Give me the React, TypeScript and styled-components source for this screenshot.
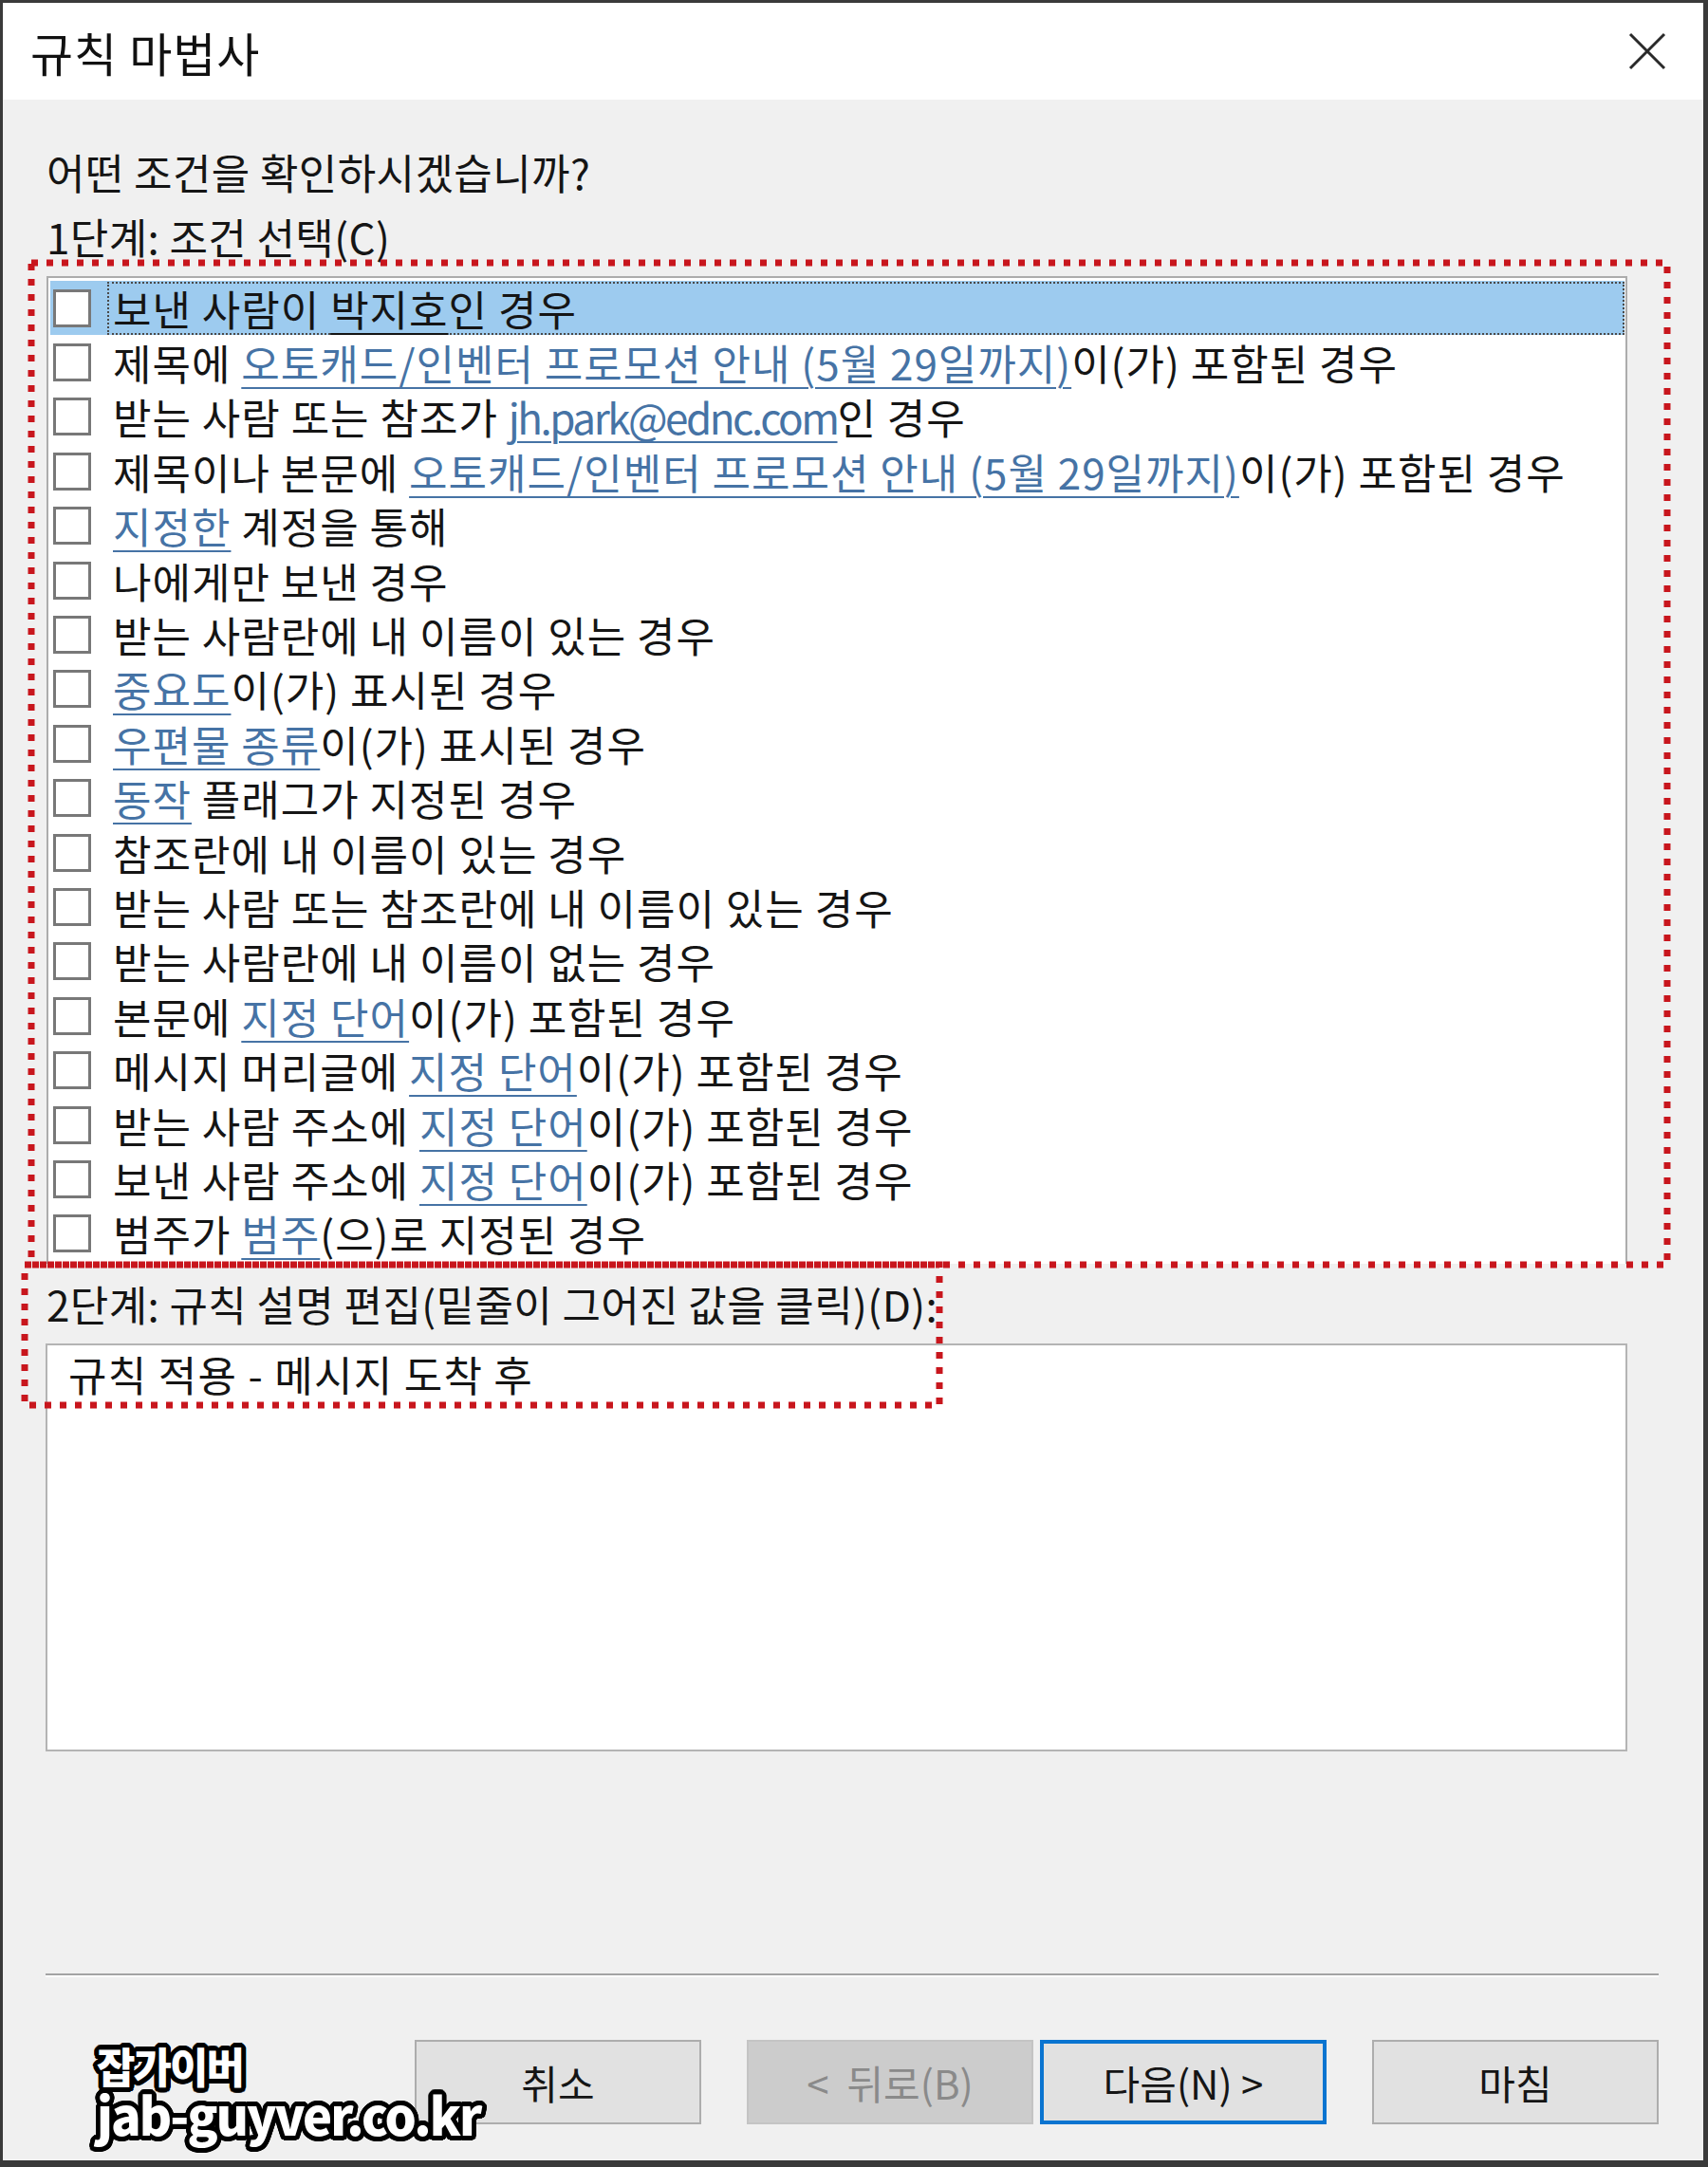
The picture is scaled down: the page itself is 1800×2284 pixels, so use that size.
import React from 'react';
import styled, { createGlobalStyle } from 'styled-components';

type Segment = { t: string; link?: boolean; latin?: boolean };

const GlobalStyle = createGlobalStyle`
  body {
    margin: 0;
    background: #3a3a3a;
  }
`;

const Screen = styled.div`
  position: relative;
  width: 1800px;
  height: 2284px;
  box-sizing: border-box;
  padding: 3px 5px 7px 3px;
  background: #3a3a3a;
  overflow: hidden;
  font-family: 'Noto Sans CJK KR', 'Noto Sans', sans-serif;
`;

const Window = styled.div`
  width: 1792px;
  height: 2274px;
  display: flex;
  flex-direction: column;
  background: #f0f0f0;
`;

const TitleBar = styled.div`
  height: 102px;
  flex-shrink: 0;
  background: #ffffff;
  display: flex;
  align-items: center;
  justify-content: space-between;
  padding: 0 38px 0 29px;
`;

const Title = styled.div`
  font-size: 49px;
  line-height: 60px;
  letter-spacing: 1px;
  color: #111;
  margin-top: 2px;
`;

const CloseButton = styled.div`
  width: 42px;
  height: 42px;
  display: flex;
  align-items: center;
  justify-content: center;
`;

const Body = styled.div`
  flex: 1;
  display: flex;
  flex-direction: column;
  padding: 0 47px 0 45px;
`;

const Label = styled.div<{ $top: number }>`
  margin-top: ${(p) => p.$top}px;
  padding-left: 1px;
  font-size: 44px;
  letter-spacing: 0.4px;
  line-height: 57px;
  height: 57px;
  color: #151515;
  white-space: nowrap;
`;

const ListBox = styled.div`
  margin: 13px 33px 0 1px;
  height: 1041px;
  box-sizing: border-box;
  border: 2px solid #acacac;
  border-bottom: none;
  background: #ffffff;
  padding: 3px 1px 0 2px;
  overflow: hidden;
`;

const Row = styled.div<{ $selected?: boolean }>`
  height: 57.4px;
  display: flex;
  align-items: center;
  background: ${(p) => (p.$selected ? '#9dcbef' : 'transparent')};
`;

const Check = styled.span`
  width: 40px;
  height: 40px;
  box-sizing: border-box;
  margin-left: 3px;
  flex-shrink: 0;
  border: 3px solid #787878;
  background: #ffffff;
`;

const ItemText = styled.span<{ $focused?: boolean }>`
  flex: 1;
  height: 56px;
  box-sizing: border-box;
  margin-left: 17px;
  padding-left: 4px;
  display: flex;
  align-items: center;
  border: 2px dotted ${(p) => (p.$focused ? '#4a4a4a' : 'transparent')};
  font-size: 44px;
  line-height: 52px;
  letter-spacing: 1px;
  color: #151515;
  white-space: pre;
`;

const LinkText = styled.span<{ $dark?: boolean; $latin?: boolean }>`
  color: ${(p) => (p.$dark ? '#151515' : '#4673a5')};
  letter-spacing: ${(p) => (p.$latin ? '-2.5px' : 'inherit')};
  text-decoration: underline;
  text-decoration-thickness: 2px;
  text-underline-offset: 7px;
`;

const DescBox = styled.div`
  margin: 13px 33px 0 0;
  height: 430px;
  box-sizing: border-box;
  border: 2px solid #b4b4b4;
  background: #ffffff;
  padding: 2px 22px;
  font-size: 44px;
  letter-spacing: 1.3px;
  line-height: 57px;
  color: #151515;
`;

const Separator = styled.div`
  margin-top: 234px;
  height: 4px;
  box-sizing: border-box;
  border-top: 2px solid #a3a3a3;
  border-bottom: 2px solid #ffffff;
`;

const ButtonRow = styled.div`
  margin-top: 66px;
  display: flex;
  justify-content: flex-end;
`;

const DialogButton = styled.div<{ $variant?: 'default' | 'disabled'; $gap: number }>`
  width: 302px;
  height: 89px;
  box-sizing: border-box;
  margin-left: ${(p) => p.$gap}px;
  display: flex;
  align-items: center;
  justify-content: center;
  font-size: 42px;
  white-space: pre;
  background: ${(p) => (p.$variant === 'disabled' ? '#cccccc' : '#e1e1e1')};
  color: ${(p) => (p.$variant === 'disabled' ? '#8a8a8a' : '#151515')};
  border: ${(p) =>
    p.$variant === 'default'
      ? '4px solid #0a74d0'
      : p.$variant === 'disabled'
      ? '2px solid #c4c4c4'
      : '2px solid #adadad'};
`;

const Annotation = styled.svg`
  position: absolute;
  left: 0;
  top: 0;
  pointer-events: none;
`;

const outline = (() => {
  const out: string[] = [];
  for (let a = 0; a < 24; a++) {
    const r = a * (Math.PI / 12);
    out.push(`${(Math.cos(r) * 5).toFixed(1)}px ${(Math.sin(r) * 5).toFixed(1)}px 0 #000`);
  }
  return out.join(', ');
})();

const Watermark = styled.div`
  position: absolute;
  left: 102px;
  top: 2154px;
  color: #ffffff;
  font-weight: 900;
  text-shadow: ${outline};
  pointer-events: none;
`;

const MarkLine = styled.div<{ $size: number; $squeeze: number }>`
  font-size: ${(p) => p.$size}px;
  line-height: ${(p) => p.$size + 2}px;
  letter-spacing: -2px;
  transform: scaleX(${(p) => p.$squeeze});
  transform-origin: left center;
  white-space: nowrap;
`;

const promo = '오토캐드/인벤터 프로모션 안내 (5월 29일까지)';

const rules: Segment[][] = [
  [{ t: '보낸 사람이 ' }, { t: '박지호', link: true }, { t: '인 경우' }],
  [{ t: '제목에 ' }, { t: promo, link: true }, { t: '이(가) 포함된 경우' }],
  [
    { t: '받는 사람 또는 참조가 ' },
    { t: 'jh.park@ednc.com', link: true, latin: true },
    { t: '인 경우' },
  ],
  [{ t: '제목이나 본문에 ' }, { t: promo, link: true }, { t: '이(가) 포함된 경우' }],
  [{ t: '지정한', link: true }, { t: ' 계정을 통해' }],
  [{ t: '나에게만 보낸 경우' }],
  [{ t: '받는 사람란에 내 이름이 있는 경우' }],
  [{ t: '중요도', link: true }, { t: '이(가) 표시된 경우' }],
  [{ t: '우편물 종류', link: true }, { t: '이(가) 표시된 경우' }],
  [{ t: '동작', link: true }, { t: ' 플래그가 지정된 경우' }],
  [{ t: '참조란에 내 이름이 있는 경우' }],
  [{ t: '받는 사람 또는 참조란에 내 이름이 있는 경우' }],
  [{ t: '받는 사람란에 내 이름이 없는 경우' }],
  [{ t: '본문에 ' }, { t: '지정 단어', link: true }, { t: '이(가) 포함된 경우' }],
  [{ t: '메시지 머리글에 ' }, { t: '지정 단어', link: true }, { t: '이(가) 포함된 경우' }],
  [{ t: '받는 사람 주소에 ' }, { t: '지정 단어', link: true }, { t: '이(가) 포함된 경우' }],
  [{ t: '보낸 사람 주소에 ' }, { t: '지정 단어', link: true }, { t: '이(가) 포함된 경우' }],
  [{ t: '범주가 ' }, { t: '범주', link: true }, { t: '(으)로 지정된 경우' }],
];

const App: React.FC = () => {
  return (
    <Screen>
      <GlobalStyle />
      <Window>
        <TitleBar>
          <Title>규칙 마법사</Title>
          <CloseButton>
            <svg width="40" height="40" viewBox="0 0 40 40">
              <path d="M2 2 L38 38 M38 2 L2 38" stroke="#2a2a2a" strokeWidth="3" fill="none" />
            </svg>
          </CloseButton>
        </TitleBar>
        <Body>
          <Label $top={48}>어떤 조건을 확인하시겠습니까?</Label>
          <Label $top={11}>1단계: 조건 선택(C)</Label>
          <ListBox>
            {rules.map((segs, i) => (
              <Row key={i} $selected={i === 0}>
                <Check />
                <ItemText $focused={i === 0}>
                  {segs.map((s, j) =>
                    s.link ? (
                      <LinkText key={j} $dark={i === 0} $latin={s.latin}>
                        {s.t}
                      </LinkText>
                    ) : (
                      <React.Fragment key={j}>{s.t}</React.Fragment>
                    )
                  )}
                </ItemText>
              </Row>
            ))}
          </ListBox>
          <Label $top={14}>2단계: 규칙 설명 편집(밑줄이 그어진 값을 클릭)(D):</Label>
          <DescBox>규칙 적용 - 메시지 도착 후</DescBox>
          <Separator />
          <ButtonRow>
            <DialogButton $gap={0}>취소</DialogButton>
            <DialogButton $gap={48} $variant="disabled">
              {'<  뒤로(B)'}
            </DialogButton>
            <DialogButton $gap={7} $variant="default">
              다음(N) &gt;
            </DialogButton>
            <DialogButton $gap={48}>마침</DialogButton>
          </ButtonRow>
        </Body>
      </Window>

      {/* red dotted annotation boxes drawn over the dialog */}
      <Annotation width="1800" height="2284" viewBox="0 0 1800 2284">
        <g fill="none" stroke="#c8161d" strokeWidth="7" strokeDasharray="7 9">
          <path d="M33 277 H1757 V1333 H33 Z" />
          <path d="M26 1333 H990 V1481 H26 Z" />
        </g>
      </Annotation>

      <Watermark>
        <MarkLine $size={44} $squeeze={1}>잡가이버</MarkLine>
        <MarkLine $size={54} $squeeze={0.97}>jab-guyver.co.kr</MarkLine>
      </Watermark>
    </Screen>
  );
};

export default App;
